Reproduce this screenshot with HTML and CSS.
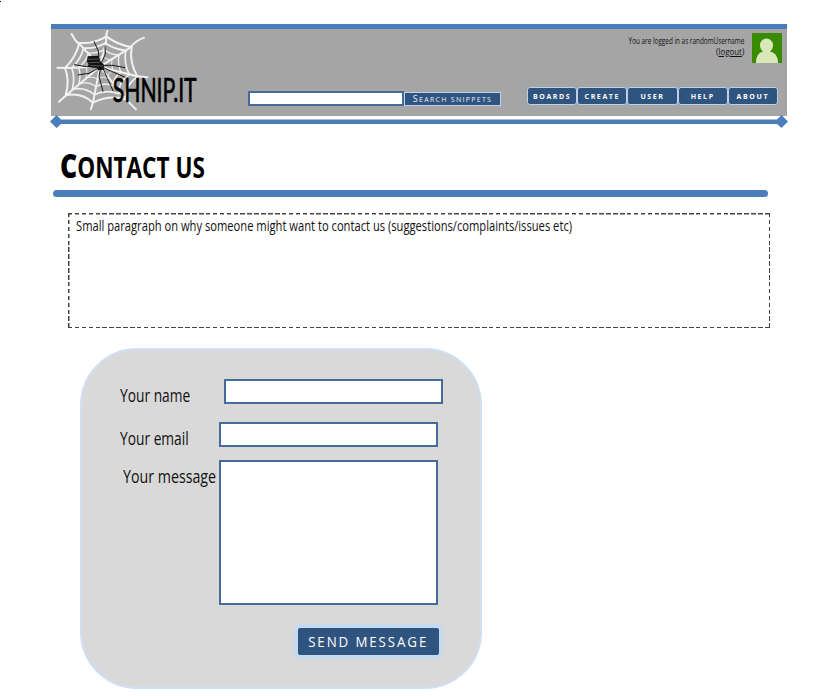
FILE: index.html
```html
<!DOCTYPE html>
<html lang="en">
<head>
<meta charset="utf-8">
<title>Shnip.it - Contact us</title>
<link rel="stylesheet" href="styles.css">
</head>
<body>
<i class="speck"></i>
<header class="header">
  <svg class="logo" viewBox="18 42 450 258" role="img" aria-label="Shnip.it">
    <g fill="none" stroke="#f2f2f2" stroke-width="6" stroke-linecap="round" stroke-linejoin="round">
      <path d="M80 57Q94 84 103 86L165 155M187 48Q181 66 184 76L165 155M297 68Q270 78 256 98L165 155M307 187L276 184L165 155M273 283L240 250L165 155M138 283L145 257L165 155M42 260L68 237L165 155M37 158L62 159L165 155"/>
      <path d="M103 84Q150 87 184 64Q218 90 260 96Q252 142 278 186Q238 210 243 254Q195 238 144 263Q111 232 62 240Q75 199 60 159Q93 127 103 84Z"/>
      <path stroke-width="5" d="M116 99Q151 102 181 84Q207 103 242 106Q236 146 253 178Q218 203 222 236Q183 222 148 239Q119 215 82 223Q91 187 80 159Q108 132 116 99Z"/>
      <path stroke-width="4" d="M130 114Q156 116 177 104Q197 119 222 120Q217 147 228 172Q202 190 204 213Q178 200 153 215Q131 197 101 207Q109 181 101 158Q124 139 130 114Z"/>
      <path stroke-width="3" d="M143 130Q158 131 173 124Q186 135 201 135Q197 150 204 166Q186 176 187 190Q173 181 158 194Q144 181 122 190Q128 172 125 157Q140 145 143 130Z"/>
    </g>
    <g fill="none" stroke="#161616" stroke-width="3" stroke-linejoin="round">
      <path d="M163 143L160 108L147 79M169 143L181 118L180 91M177 151L204 151L240 158M175 158L202 170L241 187M174 160L187 190L205 229M166 162L162 184L174 230M155 157L125 155L87 149M159 160L132 175L98 180"/>
    </g>
    <path fill="#111" d="M128 124L161 122L163 136L177 149L176 164L160 166L153 158L127 155L131 148L126 140Z"/>
    <path stroke="#777" stroke-width="2" d="M129 133L160 132M131 143L164 142M135 151L174 153"/>
    <text class="logo-text" x="203" y="260" textLength="252" lengthAdjust="spacingAndGlyphs">SHNIP.IT</text>
  </svg>
  <form class="search">
    <input class="search-input" type="text" aria-label="Search">
    <button class="search-button" type="button"><span><b>S</b>EARCH SNIPPETS</span></button>
  </form>
  <div class="account">
    <div class="user">
      <p class="status"><span class="login">You are logged in as randomUsername</span><br><span>(<a>logout</a>)</span></p>
      <svg class="avatar" viewBox="0 0 30 30"><path fill="#398b00" d="M0 0H30V30H0Z"/><path fill="#d8e8b8" d="M4 30Q4 20 11 18.500Q8 16 8 12A6.500 6.500 0 0 1 21 12Q21 16 18 18.500Q26 20 26 30Z"/></svg>
    </div>
    <nav class="nav"><a>BOARDS</a><a>CREATE</a><a>USER</a><a>HELP</a><a>ABOUT</a></nav>
  </div>
</header>
<div class="divider"></div>
<main>
  <h1 class="title"><span><b>C</b>ONTACT US</span></h1>
  <div class="rule"></div>
  <section class="intro"><p><span>Small paragraph on why someone might want to contact us (suggestions/complaints/issues etc)</span></p></section>
  <form class="contact">
    <div class="row name"><label for="name"><span>Your name</span></label><input id="name" type="text"></div>
    <div class="row email"><label for="email"><span>Your email</span></label><input id="email" type="text"></div>
    <div class="row message"><label for="message"><span>Your message</span></label><textarea id="message"></textarea></div>
    <button class="send" type="button"><span>SEND MESSAGE</span></button>
  </form>
</main>
</body>
</html>
```
FILE: styles.css
```css
* { box-sizing: border-box; }
body {
  margin: 0;
  height: 696px;
  padding-top: 24px;
  overflow: hidden;
  background: #fff;
  color: #111;
  font-family: "Open Sans", sans-serif;
}
p, h1 { margin: 0; }
input, textarea, button { display: block; margin: 0; padding: 0; border-radius: 0; font-family: inherit; }
textarea { resize: none; }
span { display: inline-block; white-space: nowrap; }
.speck { position: absolute; left: 0; top: 1px; width: 1px; height: 1px; background: #000; }

.header {
  display: flex;
  width: 736px;
  height: 92px;
  margin-left: 51px;
  border-top: 5px solid #4a7ebb;
  background: #a5a5a5;
}
.logo { width: 150px; height: 86px; flex: none; overflow: visible; }
.logo-text { font: 96px Lato, sans-serif; fill: #000; stroke: #000; stroke-width: 2; }
.search { display: flex; align-items: center; height: 15px; margin: 62px 0 0 47px; }
.search-input { width: 156px; height: 15px; border: 2px solid #446b9b; background: #fff; }
.search-button { width: 97px; height: 14px; border: 1px solid #bdd0ea; background: #305480; color: #e9eff8; font-size: 7px; line-height: 12px; letter-spacing: 1.3px; }
.search-button b { font-size: 9px; font-weight: normal; }
.account { width: 252px; margin-left: 26px; }
.user { display: flex; justify-content: flex-end; gap: 8px; height: 58px; padding: 4px 0 0; margin-right: -3px; }
.status { padding-top: 3px; text-align: right; font-size: 8.500px; line-height: 10.500px; }
.status span { transform: scaleX(.93); transform-origin: right; }
.status .login { transform: scaleX(.75); }
.status a { text-decoration: underline; }
.avatar { width: 30px; height: 30px; }
.nav { display: flex; }
.nav a { display: flex; align-items: center; justify-content: center; width: 50.200px; height: 18px; border: 1px solid #bdd0ea; border-radius: 3px; background: #305480; color: #fff; font-size: 7px; font-weight: bold; letter-spacing: 1.600px; }

.divider {
  width: 738px;
  height: 13px;
  margin: -1px 0 0 50px;
  background: linear-gradient(#4a7ebb, #4a7ebb);
  clip-path: polygon(0 6.500px, 6.500px 0, 11px 4.500px, 727px 4.500px, 731.500px 0, 738px 6.500px, 731.500px 13px, 727px 9px, 11px 9px, 6.500px 13px);
}
.title { height: 62px; padding: 18px 0 0 60px; font: bold 28px/40px "Open Sans", sans-serif; color: #000; }
.title b { font-size: 33px; }
.title span { transform: scaleX(.805); transform-origin: left; }
.rule { width: 715px; height: 7px; margin-left: 53px; border-radius: 4px; background: #4a7ebb; }
.intro {
  width: 702px;
  height: 115px;
  margin: 16px 0 0 68px;
  padding: 3px 8px;
  background:
    repeating-linear-gradient(90deg, #444 0 4.500px, transparent 4.500px 6.900px) top / 100% 1.500px no-repeat,
    repeating-linear-gradient(90deg, #444 0 4.500px, transparent 4.500px 6.900px) bottom / 100% 1.500px no-repeat,
    repeating-linear-gradient(#444 0 4.500px, transparent 4.500px 6.900px) left / 1.500px 100% no-repeat,
    repeating-linear-gradient(#444 0 4.500px, transparent 4.500px 6.900px) right / 1.500px 100% no-repeat;
  font-size: 14px;
  line-height: 20px;
}
.intro span { transform: scaleX(.798); transform-origin: left; }
.contact { width: 402px; height: 341px; margin: 20px 0 0 80px; padding-top: 29px; border: 2px solid #cfe0f5; border-radius: 57px; background: #d9d9d9; }
.row { display: flex; }
.row label { flex: none; font-size: 18px; line-height: 24px; }
.row label span { transform: scaleX(.765); transform-origin: left; }
.row input { width: 219px; height: 25px; border: 2px solid #446b9b; background: #fff; }
.row textarea { width: 219px; height: 145px; border: 2px solid #446b9b; background: #fff; }
.name { margin-left: 38px; height: 43px; }
.name label { width: 104px; padding-top: 4px; }
.email { margin-left: 38px; height: 38px; }
.email label { width: 99px; padding-top: 4px; }
.message { margin-left: 41px; }
.message label { width: 96px; padding-top: 4px; }
.message label span { transform: scaleX(.79); }
.send { width: 149px; height: 35px; margin: 19px 0 0 212px; border: 4px solid #c6daf2; border-radius: 6px; background: #305480; color: #fff; font-size: 14px; letter-spacing: 2px; }
.send span { transform: scaleX(.95); }
```
